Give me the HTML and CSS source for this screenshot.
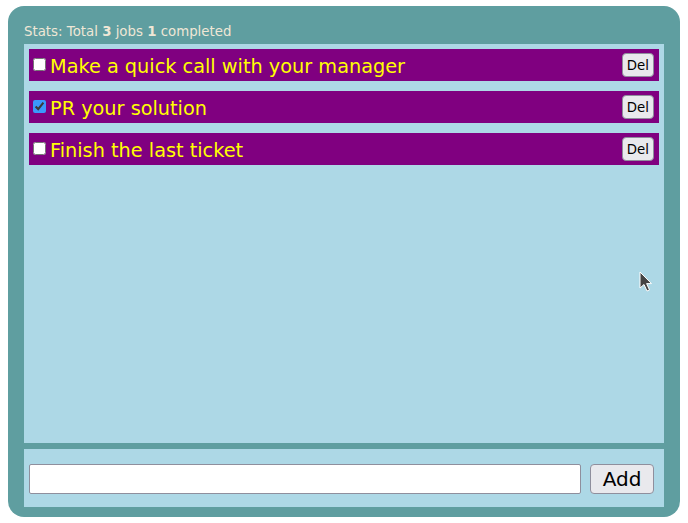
FILE: index.html
```html
<!DOCTYPE html>
<html>
<head>
<meta charset="utf-8">
<link rel="stylesheet" href="styles.css">
</head>
<body>
<div class="app">
  <div class="stats">Stats: Total <b>3</b> jobs <b>1</b> completed</div>
  <div class="list">
    <div class="item"><input type="checkbox" class="check"><span class="label">Make a quick call with your manager</span><button class="del">Del</button></div>
    <div class="item"><input type="checkbox" class="check" checked><span class="label">PR your solution</span><button class="del">Del</button></div>
    <div class="item"><input type="checkbox" class="check"><span class="label">Finish the last ticket</span><button class="del">Del</button></div>
  </div>
  <div class="add-row">
    <input type="text" class="new-input">
    <button class="add">Add</button>
  </div>
  <svg class="cursor" width="14" height="22" viewBox="0 0 14 22"><path d="M1 1 L1 17 L5 13.5 L8 20 L10.5 19 L7.6 12.6 L12.5 12.6 Z" fill="#444" stroke="#fff" stroke-width="1"/></svg>
</div>
</body>
</html>
```
FILE: styles.css
```css
html, body {
  margin: 0;
  padding: 0;
}
body {
  padding: 6px 8px 0 8px;
  font-family: "DejaVu Sans", sans-serif;
}
.app {
  position: relative;
  background: #5f9ea0;
  border-radius: 16px;
  padding: 17px 16px 10px 16px;
  height: 511px;
  box-sizing: border-box;
  display: flex;
  flex-direction: column;
}
.stats {
  color: #efe7d6;
  font-size: 13.33px;
  line-height: 17px;
  height: 21px;
}
.list {
  background: #add8e6;
  flex: 1;
  padding: 5px;
  display: flex;
  flex-direction: column;
  gap: 10px;
}
.item {
  background: #800080;
  height: 32px;
  display: flex;
  align-items: center;
}
.check {
  width: 13px;
  height: 13px;
  margin: 0 4px 0 4px;
  position: relative;
  top: -1px;
  accent-color: #3b99fc;
}
.label {
  color: #ffff00;
  font-size: 19.3px;
  padding-top: 2px;
  flex: 1;
  white-space: nowrap;
}
.del {
  font-family: "DejaVu Sans", sans-serif;
  font-size: 13.33px;
  height: 24px;
  padding: 0 4px;
  margin-right: 5px;
  background: #e9e9ed;
  border: 1px solid #8f8f9d;
  border-radius: 4px;
  color: #000;
}
.add-row {
  margin-top: 6px;
  background: #add8e6;
  height: 58px;
  box-sizing: border-box;
  padding: 15px 10px 13px 5px;
  display: flex;
  gap: 9px;
}
.new-input {
  flex: 1;
  height: 30px;
  box-sizing: border-box;
  border: 1px solid #8f8f9d;
  border-radius: 2px;
  background: #fff;
  margin: 0;
}
.add {
  width: 64px;
  height: 30px;
  font-family: "DejaVu Sans", sans-serif;
  font-size: 20px;
  background: #e9e9ed;
  border: 1px solid #8f8f9d;
  border-radius: 4px;
  color: #000;
  padding: 0;
  margin: 0;
}
.cursor {
  position: absolute;
  left: 631px;
  top: 265px;
}
```
